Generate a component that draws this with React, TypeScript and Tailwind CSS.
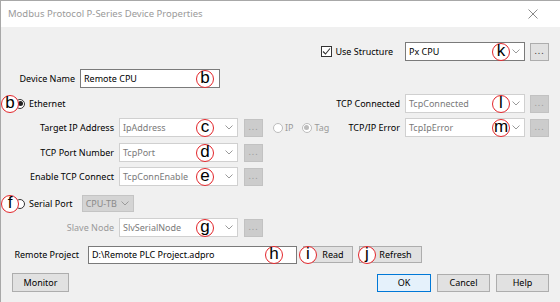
import React from 'react';

type Tone = 'normal' | 'muted' | 'disabled';

const Mark = ({ letter, className = '' }: { letter: string; className?: string }) => (
  <span
    className={`absolute top-1/2 -translate-y-1/2 w-[18px] h-[18px] rounded-full border-[1.5px] border-[#e3262b] bg-white flex items-center justify-center font-['Liberation_Sans',sans-serif] text-[17px] leading-none text-black z-10 ${className}`}
  >
    <span className="-mt-[2px]">{letter}</span>
  </span>
);

const Chevron = () => (
  <svg width="8" height="5" viewBox="0 0 8 5" className="ml-auto mr-[4px] shrink-0">
    <path d="M0.5 0.5 L4 4 L7.5 0.5" fill="none" stroke="#9a9a9a" strokeWidth="1" />
  </svg>
);

interface ComboProps {
  value: string;
  className: string;
  tone?: Tone;
  mark?: string;
  markClass?: string;
  chevron?: boolean;
}

const Combo: React.FC<ComboProps> = ({ value, className, tone = 'normal', mark, markClass = '', chevron = true }) => {
  const box =
    tone === 'normal'
      ? 'bg-white border-[#7a7a7a] text-black'
      : tone === 'muted'
      ? 'bg-white border-[#d0d0d0] text-[#7a7a7a]'
      : 'bg-[#d4d4d4] border-[#c4c4c4] text-[#8a8a8a]';
  return (
    <div className={`relative flex items-center border pl-[3px] shrink-0 ${box} ${className}`}>
      <span className="whitespace-nowrap leading-none">{value}</span>
      {chevron && <Chevron />}
      {mark && <Mark letter={mark} className={markClass} />}
    </div>
  );
};

const Ellipsis = ({ disabled = false }: { disabled?: boolean }) => (
  <div
    className={`w-[19px] h-[18px] flex items-center justify-center border shrink-0 leading-none ${
      disabled ? 'bg-[#cccccc] border-[#c2c2c2] text-[#9a9a9a]' : 'bg-[#e1e1e1] border-[#adadad] text-[#333]'
    }`}
  >
    <span className="-mt-[3px] tracking-[1px]">...</span>
  </div>
);

const Radio = ({ checked = false, disabled = false }: { checked?: boolean; disabled?: boolean }) => (
  <span
    className={`w-[10px] h-[10px] rounded-full border bg-white flex items-center justify-center shrink-0 ${
      disabled ? 'border-[#bcbcbc]' : 'border-[#333]'
    }`}
  >
    {checked && <span className={`w-[5px] h-[5px] rounded-full ${disabled ? 'bg-[#bcbcbc]' : 'bg-[#222]'}`} />}
  </span>
);

const Button = ({ label, className, primary = false }: { label: string; className: string; primary?: boolean }) => (
  <div
    className={`flex items-center justify-center border leading-none shrink-0 ${
      primary ? 'bg-[#e5f1fb] border-[#0078d7]' : 'bg-[#e1e1e1] border-[#adadad]'
    } ${className}`}
  >
    {label}
  </div>
);

const LeftLabel = ({ text, muted = false }: { text: string; muted?: boolean }) => (
  <span className={`w-[113px] text-right whitespace-nowrap shrink-0 ${muted ? 'text-[#9a9a9a]' : 'text-black'}`}>{text}</span>
);

export default function App() {
  return (
    <div className="w-[560px] h-[302px] overflow-hidden bg-[#f0f0f0] border-l border-t border-[#a8a8a8] font-['Noto_Sans',sans-serif] text-[9px] text-black flex flex-col">
      {/* Title bar */}
      <div className="h-[26px] bg-white flex items-center pl-[7px] pr-[22px] shrink-0">
        <span className="text-[9.5px] text-[#9a9a9a] whitespace-nowrap">Modbus Protocol P-Series Device Properties</span>
        <svg width="10" height="10" viewBox="0 0 10 10" className="ml-auto">
          <path d="M0.5 0.5 L9.5 9.5 M9.5 0.5 L0.5 9.5" stroke="#8a8a8a" strokeWidth="1" />
        </svg>
      </div>

      {/* Use Structure */}
      <div className="mt-[15px] h-[19px] flex items-center justify-end pr-[11px]">
        <span className="w-[11px] h-[11px] border border-[#333] bg-white flex items-center justify-center">
          <svg width="9" height="9" viewBox="0 0 9 9">
            <path d="M1 4.5 L3.5 7 L8 1.5" fill="none" stroke="#333" strokeWidth="1.1" />
          </svg>
        </span>
        <span className="ml-[3px] whitespace-nowrap">Use Structure</span>
        <Combo value="Px CPU" className="ml-[12px] w-[120px] h-[19px]" mark="k" markClass="left-[86px]" />
        <div className="ml-[5px]">
          <Ellipsis />
        </div>
      </div>

      {/* Device Name */}
      <div className="mt-[8px] h-[19px] flex items-center gap-[5px]">
        <span className="w-[74px] text-right whitespace-nowrap">Device Name</span>
        <Combo value="Remote CPU" className="w-[140px] h-[19px]" chevron={false} mark="b" markClass="left-[115px]" />
      </div>

      {/* Ethernet / TCP Connected */}
      <div className="mt-[6px] h-[19px] flex items-center justify-between pr-[11px]">
        <div className="relative flex items-center pl-[14px] h-full">
          <Mark letter="b" className="left-0" />
          <Radio checked />
          <span className="ml-[4px]">Ethernet</span>
        </div>
        <div className="flex items-center gap-[5px] h-full">
          <span className="whitespace-nowrap">TCP Connected</span>
          <Combo value="TcpConnected" tone="muted" className="w-[120px] h-[19px]" mark="l" markClass="left-[86px]" />
          <Ellipsis disabled />
        </div>
      </div>

      {/* Target IP / TCP/IP Error */}
      <div className="mt-[5px] h-[19px] flex items-center justify-between pr-[11px]">
        <div className="flex items-center h-full">
          <LeftLabel text="Target IP Address" />
          <Combo value="IpAddress" tone="muted" className="ml-[5px] w-[119px] h-[19px]" mark="c" markClass="left-[76px]" />
          <div className="ml-[6px]">
            <Ellipsis disabled />
          </div>
          <div className="ml-[10px] flex items-center text-[#9a9a9a]">
            <Radio disabled />
            <span className="ml-[2px]">IP</span>
            <span className="ml-[8px]">
              <Radio checked disabled />
            </span>
            <span className="ml-[3px]">Tag</span>
          </div>
        </div>
        <div className="flex items-center gap-[5px] h-full">
          <span className="whitespace-nowrap">TCP/IP Error</span>
          <Combo value="TcpIpError" tone="muted" className="w-[120px] h-[19px]" mark="m" markClass="left-[86px]" />
          <Ellipsis disabled />
        </div>
      </div>

      {/* TCP Port Number */}
      <div className="mt-[6px] h-[19px] flex items-center">
        <LeftLabel text="TCP Port Number" />
        <Combo value="TcpPort" tone="muted" className="ml-[5px] w-[119px] h-[19px]" mark="d" markClass="left-[76px]" />
        <div className="ml-[6px]">
          <Ellipsis disabled />
        </div>
      </div>

      {/* Enable TCP Connect */}
      <div className="mt-[5px] h-[19px] flex items-center">
        <LeftLabel text="Enable TCP Connect" />
        <Combo value="TcpConnEnable" tone="muted" className="ml-[5px] w-[119px] h-[19px]" mark="e" markClass="left-[76px]" />
        <div className="ml-[6px]">
          <Ellipsis disabled />
        </div>
      </div>

      {/* Serial Port */}
      <div className="mt-[8px] h-[19px] flex items-center">
        <div className="relative flex items-center pl-[14px] h-full">
          <Mark letter="f" className="left-0" />
          <Radio />
          <span className="ml-[4px] whitespace-nowrap">Serial Port</span>
        </div>
        <Combo value="CPU-TB" tone="disabled" className="ml-[9px] w-[52px] h-[17px]" />
      </div>

      {/* Slave Node */}
      <div className="mt-[5px] h-[19px] flex items-center">
        <LeftLabel text="Slave Node" muted />
        <Combo value="SlvSerialNode" tone="muted" className="ml-[5px] w-[119px] h-[19px]" mark="g" markClass="left-[76px]" />
        <div className="ml-[6px]">
          <Ellipsis disabled />
        </div>
      </div>

      {/* Remote Project */}
      <div className="mt-[8px] h-[19px] flex items-center">
        <span className="w-[78px] text-right whitespace-nowrap">Remote Project</span>
        <Combo
          value="D:\Remote PLC Project.adpro"
          className="ml-[9px] w-[209px] h-[18px]"
          chevron={false}
          mark="h"
          markClass="left-[176px]"
        />
        <div className="relative ml-[6px] h-full flex items-center">
          <Button label="Read" className="w-[50px] h-[17px] pl-[10px]" />
          <Mark letter="i" className="-left-[4px]" />
        </div>
        <div className="relative ml-[6px] h-full flex items-center">
          <Button label="Refresh" className="w-[63px] h-[17px] pl-[10px]" />
          <Mark letter="j" className="-left-[1px]" />
        </div>
      </div>

      {/* Bottom buttons */}
      <div className="mt-[9px] h-[19px] flex items-center pl-[11px] pr-[11px]">
        <Button label="Monitor" className="w-[57px] h-[19px]" />
        <div className="ml-auto flex items-center gap-[6px]">
          <Button label="OK" primary className="w-[54px] h-[18px]" />
          <Button label="Cancel" className="w-[53px] h-[18px]" />
          <Button label="Help" className="w-[53px] h-[18px]" />
        </div>
      </div>
    </div>
  );
}
